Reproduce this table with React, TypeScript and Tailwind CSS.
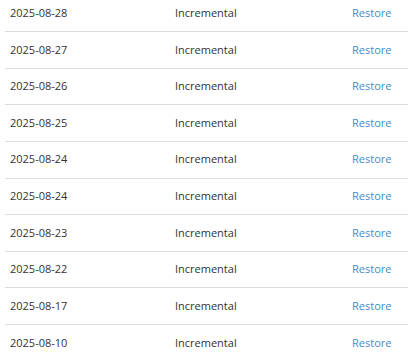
const backups = [
  { date: '2025-08-28', type: 'Incremental' },
  { date: '2025-08-27', type: 'Incremental' },
  { date: '2025-08-26', type: 'Incremental' },
  { date: '2025-08-25', type: 'Incremental' },
  { date: '2025-08-24', type: 'Incremental' },
  { date: '2025-08-24', type: 'Incremental' },
  { date: '2025-08-23', type: 'Incremental' },
  { date: '2025-08-22', type: 'Incremental' },
  { date: '2025-08-17', type: 'Incremental' },
  { date: '2025-08-10', type: 'Incremental' },
];

export default function App() {
  return (
    <div className="h-[360px] overflow-hidden bg-white font-['Open_Sans',sans-serif] text-[11px] text-[#333]">
      <div className="-mt-[5.625px] ml-[5px] w-[403px] flex flex-col">
        {backups.map((b, i) => (
          <div
            key={i}
            className="h-[36.625px] flex items-center border-t border-[#ddd] pl-[5px]"
          >
            <span className="w-[165px]">{b.date}</span>
            <span className="w-[177px]">{b.type}</span>
            <a href="#" className="text-[#428bca]">
              Restore
            </a>
          </div>
        ))}
      </div>
    </div>
  );
}
